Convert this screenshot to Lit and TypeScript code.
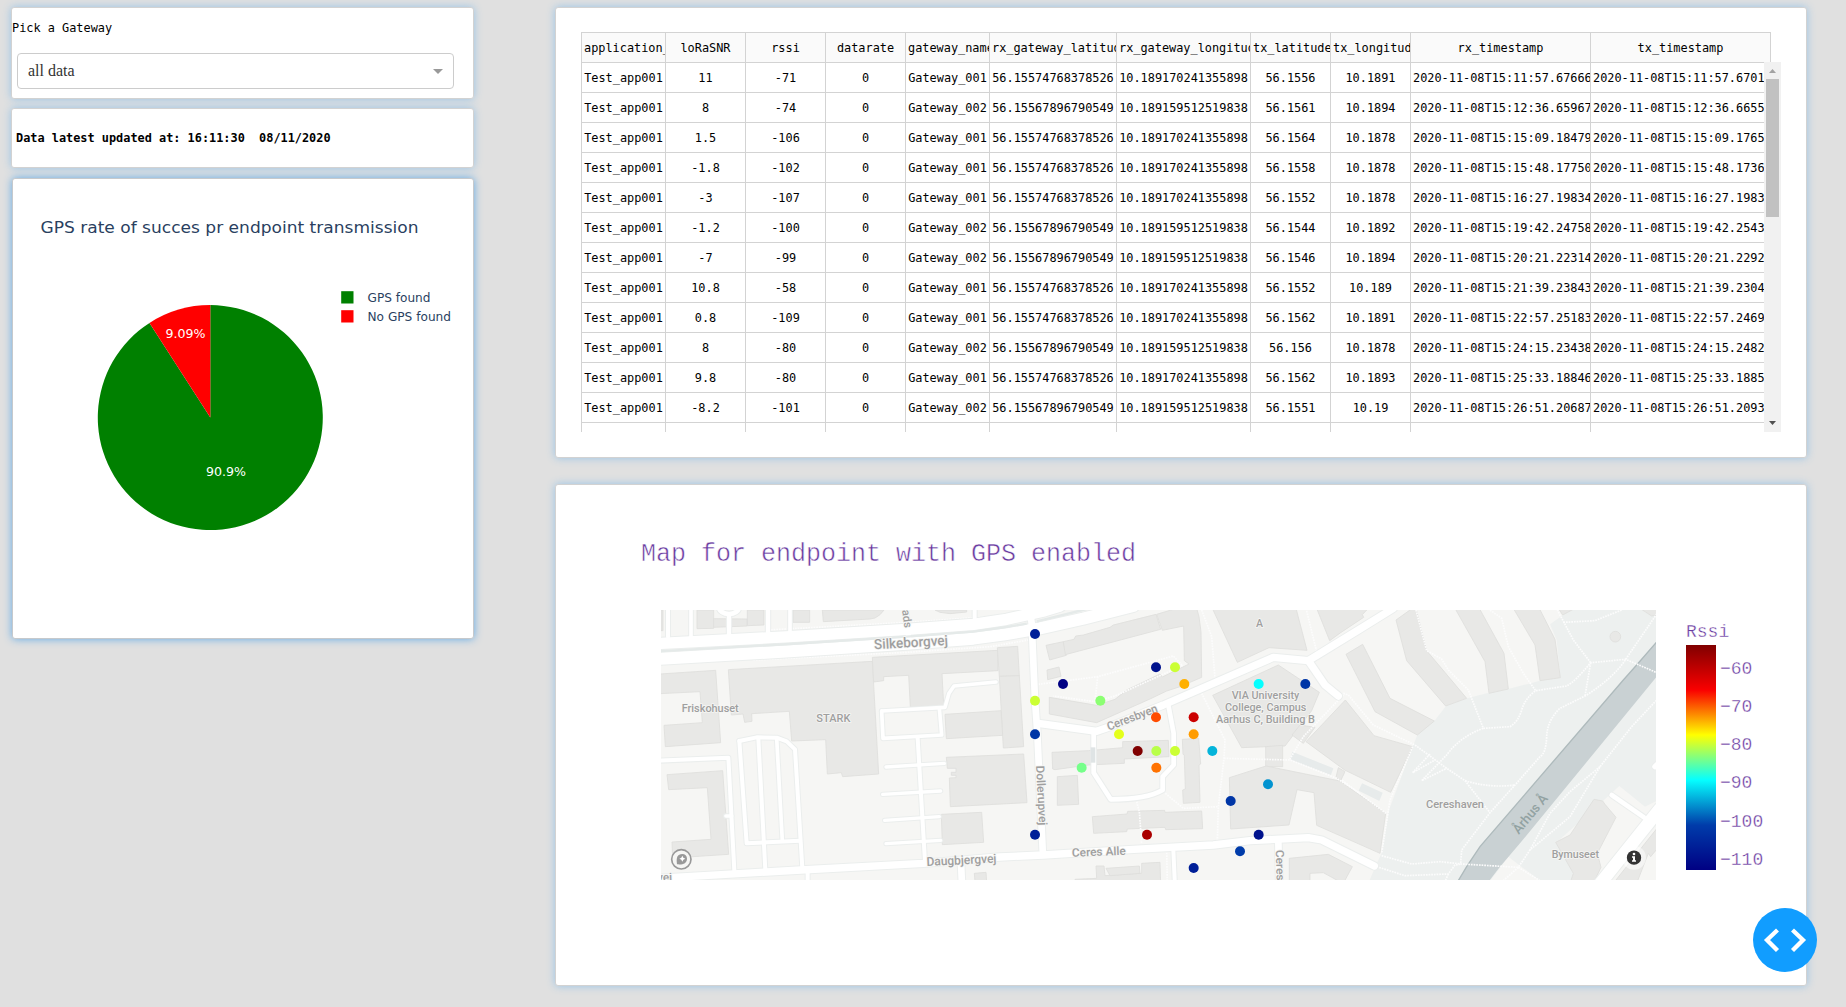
import { LitElement, html, svg, css } from "lit";
import { customElement } from "lit/decorators.js";

const COLUMNS = [
  "application_", "loRaSNR", "rssi", "datarate", "gateway_name", "rx_gateway_latitude",
  "rx_gateway_longitude", "tx_latitude", "tx_longitude", "rx_timestamp", "tx_timestamp",
];

// SNR, RSSI, gateway number, tx latitude, tx longitude, rx time, tx time
const READINGS: [string, string, number, string, string, string, string][] = [
  ["11", "-71", 1, "56.1556", "10.1891", "15:11:57.67666", "15:11:57.6701"],
  ["8", "-74", 2, "56.1561", "10.1894", "15:12:36.65967", "15:12:36.6655"],
  ["1.5", "-106", 1, "56.1564", "10.1878", "15:15:09.18479", "15:15:09.1765"],
  ["-1.8", "-102", 1, "56.1558", "10.1878", "15:15:48.17750", "15:15:48.1736"],
  ["-3", "-107", 1, "56.1552", "10.1878", "15:16:27.19834", "15:16:27.1983"],
  ["-1.2", "-100", 2, "56.1544", "10.1892", "15:19:42.24758", "15:19:42.2543"],
  ["-7", "-99", 2, "56.1546", "10.1894", "15:20:21.22314", "15:20:21.2292"],
  ["10.8", "-58", 1, "56.1552", "10.189", "15:21:39.23843", "15:21:39.2304"],
  ["0.8", "-109", 1, "56.1562", "10.1891", "15:22:57.25183", "15:22:57.2469"],
  ["8", "-80", 2, "56.156", "10.1878", "15:24:15.23438", "15:24:15.2482"],
  ["9.8", "-80", 1, "56.1562", "10.1893", "15:25:33.18846", "15:25:33.1885"],
  ["-8.2", "-101", 2, "56.1551", "10.19", "15:26:51.20687", "15:26:51.2093"],
];

const GATEWAYS: Record<number, [string, string, string]> = {
  1: ["Gateway_001", "56.15574768378526", "10.189170241355898"],
  2: ["Gateway_002", "56.15567896790549", "10.189159512519838"],
};

const ROWS: string[][] = READINGS.map(([snr, rssi, gw, lat, lon, rx, tx]) => [
  "Test_app001", snr, rssi, "0", ...GATEWAYS[gw], lat, lon, "2020-11-08T" + rx, "2020-11-08T" + tx,
]);

@customElement("data-grid")
export class DataGrid extends LitElement {
  static styles = css`
    :host { display: block; font: 11.88px/29px "DejaVu Sans Mono", monospace; color: #000; }
    .row { display: grid; grid-template-columns: 84px 80px 80px 80px 84px 127px 134px 80px 80px 180px 180px; height: 30px; }
    .head { width: 1189px; border-right: 1px solid #d3d3d3; }
    .head .cell { background: #fafafa; }
    .cell { box-sizing: border-box; height: 30px; border-top: 1px solid #d3d3d3; border-left: 1px solid #d3d3d3; padding: 1px 2px 0; overflow: hidden; white-space: nowrap; text-align: center; }
    .row:not(.head) .cell:nth-child(11) { text-align: left; }
    .body { display: flex; height: 370px; }
    .rows { width: 1183px; height: 370px; overflow: hidden; }
    .bar { width: 17px; background: #f1f1f1; display: flex; flex-direction: column; align-items: center; }
    .bar svg { display: block; width: 17px; height: 17px; }
    .thumb { width: 13px; height: 138px; background: #c1c1c1; }
    .space { flex: 1; }
  `;

  render() {
    return html`
      <div class="row head">${COLUMNS.map((c) => html`<div class="cell">${c}</div>`)}</div>
      <div class="body">
        <div class="rows">
          ${ROWS.map((r) => html`<div class="row">${r.map((c) => html`<div class="cell">${c}</div>`)}</div>`)}
          <div class="row">${COLUMNS.map(() => html`<div class="cell"></div>`)}</div>
        </div>
        <div class="bar">
          <svg viewBox="0 0 17 17"><path d="M5 11L8.5 7L12 11Z" fill="#a3a3a3" /></svg>
          <div class="thumb"></div>
          <div class="space"></div>
          <svg viewBox="0 0 17 17"><path d="M5 6L8.5 10L12 6Z" fill="#505050" /></svg>
        </div>
      </div>
    `;
  }
}

@customElement("gps-pie")
export class GpsPie extends LitElement {
  static styles = css`
    :host { display: block; }
    svg { display: block; width: 459px; height: 459px; font-family: Verdana, "DejaVu Sans", sans-serif; }
    .title { font-size: 16.7px; fill: #2a3f5f; }
    .legend { font-size: 12px; fill: #2a3f5f; }
    .value { font-size: 12.4px; fill: #fff; text-anchor: middle; }
  `;

  render() {
    const cx = 210.3, cy = 417.6, r = 112.5;
    const a = (2 * Math.PI) / 11;
    const x = cx - r * Math.sin(a), y = cy - r * Math.cos(a);
    return html`
      <svg viewBox="13 179 459 459">
        <text class="title" x="40.5" y="232.600" textLength="378" lengthAdjust="spacingAndGlyphs">GPS rate of succes pr endpoint transmission</text>
        <path d="M${cx} ${cy}V${cy - r}A${r} ${r} 0 1 1 ${x} ${y}Z" fill="#008000" />
        <path d="M${cx} ${cy}L${x} ${y}A${r} ${r} 0 0 1 ${cx} ${cy - r}Z" fill="#f00" />
        <text class="value" x="185.5" y="338" textLength="40" lengthAdjust="spacingAndGlyphs">9.09%</text>
        <text class="value" x="226" y="476" textLength="40" lengthAdjust="spacingAndGlyphs">90.9%</text>
        <rect x="341.2" y="291.2" width="12.3" height="12.3" fill="#008000" />
        <rect x="341.2" y="310.2" width="12.3" height="12.3" fill="#f00" />
        <text class="legend" x="367.5" y="302" textLength="63" lengthAdjust="spacingAndGlyphs">GPS found</text>
        <text class="legend" x="367.5" y="321" textLength="83.5" lengthAdjust="spacingAndGlyphs">No GPS found</text>
      </svg>
    `;
  }
}

type Shapes = { t: string; parks?: string[]; water?: string[]; buildings: string[]; roads: [number, string][]; paths: string[] };

// The street map is described in three sectors, each with its own origin.
const WEST: Shapes = {
  t: "translate(0 0)",
  buildings: [
    "63,270 69,270 69,332 63,332",
    "171,270 221,270 221,325 171,326",
    "221,296 322,297 322,318 221,322",
    "322,270 372,270 372,315 322,317",
    "459,270 509,270 509,307 459,307",
    "547,270 732,270 720,284 705,294 690,297 550,305",
    "885,270 980,270 980,276 930,281 900,277",
    "60,462 227,451 242,668 76,680 72,616 187,608 180,515 60,521",
    "265,449 697,424 716,762 608,770 604,758 562,762 557,659 455,663 448,574 335,581 336,604 314,607 309,582 274,585",
    "697,412 1074,391 1074,452 906,461 911,556 811,561 806,466 731,470 731,482 701,486",
    "1072,383 1133,379 1138,468 1078,469",
    "1078,469 1138,467 1151,680 1090,684",
    "915,583 1083,572 1088,646 919,656",
    "919,712 1151,702 1161,848 931,860 928,774 948,773 948,766 934,766 934,757 948,757 948,745 922,745",
    "904,883 1025,877 1031,967 907,974",
    "81,764 248,752 266,1003 98,1014 96,966 213,958 202,803 86,809",
    "1003,1060 1038,1057 1040,1085 1005,1085",
  ],
  roads: [
    [12, "M84 265V350"], [11, "M153 265V350"], [13, "M267 285V345"], [14, "M237 262A30 20 0 0 0 297 262"],
    [13, "M384 265V335"], [11, "M450 265V335"], [12, "M1004 265V294"], [16, "M796 265L808 370"],
    [34, "M50 371L450 350L800 328L1000 313L1100 298L1215 272L1260 258"],
    [36, "M50 417L450 394L800 371L1000 356L1090 344L1200 325L1330 296L1480 258"],
    [12, "M60 722L265 713L283 1052"], [11, "M258 888H275"],
    [12, "M298 663L350 652L410 653L440 664L465 688L487 1045"],
    [12, "M298 663L320 970L480 962"], [12, "M355 655L376 1050"], [11, "M410 655L427 962"],
    [11, "M725 573L915 562L927 520L942 498L1068 486"],
    [11, "M725 573L729 655L905 645L898 565"],
    [12, "M833 655L855 1025"],
    [10, "M738 741L913 730"], [10, "M728 823L902 813"], [10, "M734 901L898 890"], [10, "M738 971L902 961"],
    [12, "M503 1050V1090"], [20, "M963 1030L966 1090"],
    [20, "M1168 260L1175 310L1185 540L1192 640L1208 990"],
    [22, "M50 1075L483 1050L850 1030L1080 1011L1210 1005L1480 988L1720 975L1830 962L2005 953L2045 960L2203 1038"],
  ],
  paths: ["M385 330L800 307L1050 290L1165 268", "M340 420L800 397L1050 380L1165 360"],
};

const CENTRE: Shapes = {
  t: "translate(1080 210)",
  water: ["877,485 1000,535 993,555 870,508"],
  buildings: [
    "138,166 190,155 199,196 149,210",
    "190,155 222,148 227,138 250,135 330,112 340,105 468,73 482,118 196,194",
    "470,73 530,55 590,55 597,80 603,125 605,262 540,290 500,303 450,327 290,398 148,372 148,322 290,346 345,328 380,300 480,252 487,261 567,222 553,212 551,108 487,121",
    "141,240 177,231 183,259 143,269",
    "156,487 265,482 368,473 368,455 505,451 507,500 373,507 373,520 265,525 165,539 158,537",
    "172,560 232,556 236,643 172,646",
    "547,448 596,445 602,522 597,525 600,637 550,640 548,600 556,597 553,495 549,493",
    "277,680 381,672 383,664 494,661 495,667 605,663 608,716 497,719 495,712 382,717 380,725 281,730",
    "637,55 888,55 921,181 807,173 712,217",
    "950,55 1105,55 1087,74 1091,82 1022,128 989,152",
    "638,316 835,225 958,307 935,362 855,468 725,473",
    "797,470 848,466 848,530 797,530",
    "688,563 798,528 1020,573 1157,670 1140,790 950,706 942,608 891,599 867,705 692,717",
    "868,805 985,793 1057,830 1030,880 1010,870 970,848 930,850 930,880 868,880",
    "225,868 290,865 288,828 312,828 315,857 425,850 425,820 480,817 482,880 225,880",
    "318,835 418,828 420,850 330,857",
    "1015,533 1035,545 1022,572 1008,562",
    "900,405 945,412 910,460 876,435",
  ],
  roads: [
    [14, "M505 345L521 430V525L488 560V600Q440 628 332 628L281 548V430"],
    [22, "M115 400L290 424L330 410L490 345L820 202L925 212L1075 120L1180 55"],
    [22, "M925 212L975 285L1015 318"],
    [12, "M520 780L525 890"], [20, "M835 755L838 890"],
  ],
  paths: [
    "M605 60L635 140L645 265", "M605 310L675 450L672 505L655 650L652 750",
    "M672 505L870 510L1010 565L1080 610", "M490 605L550 655L655 650", "M410 635L418 665L425 760",
    "M115 283L293 260L520 198L545 225", "M293 260L285 335L160 318", "M285 335L345 318L550 225",
    "M500 780L502 880", "M918 55L950 185", "M1030 315L910 440L868 510",
  ],
};

const EAST: Shapes = {
  t: "translate(2100 210)",
  parks: [
    "630,103 665,78 700,55 955,55 955,630 915,650 838,588 770,650 650,757 700,850 690,880 610,880 505,800 445,880 85,880 108,825 125,790 147,660 218,470 232,435 283,393 318,348 382,325 440,310 505,297 600,272 661,263 650,150",
  ],
  water: ["66,580 128,608 118,633 56,602"],
  buildings: [
    "18,193 68,163 150,325 283,393 232,435 105,365",
    "168,90 217,55 228,55 260,182 380,325 317,348 200,212",
    "345,55 418,55 492,190 505,297 447,310 435,215",
    "520,55 598,55 645,148 661,263 600,272 585,165",
    "668,75 705,55 655,55",
    "900,55 955,55 955,75 935,78",
    "16,330 102,437 218,470 152,607 14,540 -102,455",
    "762,628 788,633 795,643 828,682 772,790 783,832 760,880 690,880 700,850 647,757 690,735 720,690",
    "955,710 955,772 932,800 925,790 890,880 820,880 915,760",
  ],
  roads: [
    [14, "M815 615L912 682"], [16, "M945 530L960 515"],
    [37, "M770 894L960 656"],
  ],
  paths: [
    "M10 310L25 315L100 405L225 465L320 535L375 572L450 668",
    "M228 60L260 182L305 207L325 240L385 300L430 415",
    "M450 60L485 85L505 170L550 250L587 302",
    "M430 415L510 410Q535 395 545 360T587 302L680 288Q705 275 752 218L857 208L955 250",
    "M430 415Q360 440 320 495L245 572L320 535", "M270 492L218 548L285 510",
    "M375 572Q450 595 525 585",
    "M955 65L857 208Q820 265 735 318L660 355Q622 390 620 440T600 500L525 585L450 668L365 780L362 820",
    "M752 218L735 318", "M752 218L700 150L652 60", "M670 97L765 92L845 60",
    "M218 470L150 630L125 790", "M125 797L215 822L300 815L365 822L535 832", "M110 830L195 857L325 852L345 825L365 822", "M325 852L315 875",
    "M955 325L875 410L780 530L690 680L570 780L535 832", "M780 530L690 605L630 670L570 780",
    "M535 832L600 872", "M535 832L490 872", "M138 670L5 570",
  ],
};

const SECTORS = [WEST, CENTRE, EAST];

const POINTS: [number, number, string][] = [
  [105, 132, "#001f98"], [189, 282, "#000083"], [468, 232, "#00128d"], [525, 232, "#cbff34"],
  [553, 282, "#ffb000"], [301, 332, "#8cff73"], [105, 332, "#cbff34"], [468, 382, "#ff4c00"],
  [581, 382, "#cb0000"], [357, 433, "#e4ff1b"], [581, 433, "#ff9c00"], [105, 433, "#0036a6"],
  [413, 483, "#800000"], [469, 483, "#b9ff48"], [525, 483, "#cbff34"], [637, 483, "#04b4da"],
  [245, 533, "#76ff8a"], [469, 533, "#ff7200"], [776, 282, "#05ffff"], [916, 282, "#0036a6"],
  [804, 583, "#0293d0"], [692, 633, "#0036a6"], [105, 734, "#001f98"], [441, 734, "#aa0000"],
  [776, 734, "#00128d"], [720, 784, "#003caa"], [581, 834, "#001f98"],
];

// x, y, rotation, length, font size, text; x and y are relative to the west sector
const LABELS: [number, number, number, number, number, string][] = [
  [703, 388, -3.4, 222, 42, "Silkeborgvej"],
  [125, 576, 0, 171, 33, "Friskohuset"],
  [529, 606, 0, 102, 33, "STARK"],
  [860, 1038, -2.8, 210, 37, "Daugbjergvej"],
  [52, 1084, -2, 45, 34, "vej"],
  [786, 271, 82, 54, 34, "ads"],
  [1406, 632, -21, 160, 35, "Ceresbyen"],
  [1188, 737, 87, 180, 35, "Dollerupvej"],
  [1296, 1010, -2, 162, 35, "Ceres Alle"],
  [1848, 320, 0, 21, 33, "A"],
  [1775, 538, 0, 203, 34, "VIA University"],
  [1755, 574, 0, 244, 34, "College, Campus"],
  [1728, 610, 0, 297, 34, "Aarhus C, Building B"],
  [1907, 990, 88, 92, 34, "Ceres"],
  [2358, 864, 0, 174, 34, "Cereshaven"],
  [2735, 1014, 0, 142, 34, "Bymuseet"],
  [2636, 944, -50, 140, 40, "Århus Å"],
];

@customElement("endpoint-map")
export class EndpointMap extends LitElement {
  static styles = css`
    :host { display: block; width: 995px; height: 270px; }
    svg { display: block; width: 995px; height: 270px; }
    .land { fill: #f6f6f4; }
    .park { fill: #edf0ef; }
    .pond { fill: #e7ebeb; }
    .river { fill: #c9d1d3; }
    .bank { fill: none; stroke: #aebabc; stroke-width: 4; }
    .building { fill: #e8e8e6; stroke: #dededc; stroke-width: 2.5; }
    .casing { fill: none; stroke: #ebeeed; stroke-linecap: round; stroke-linejoin: round; }
    .road { fill: none; stroke: #fff; stroke-linecap: round; stroke-linejoin: round; }
    .path { fill: none; stroke: #fcfcfc; stroke-width: 5; stroke-dasharray: 5 3; }
    .median { fill: none; stroke: #e5eae9; stroke-width: 7; }
    .label { font-family: "Roboto", sans-serif; font-weight: 500; fill: #9f9f9f; stroke: #f6f6f4; stroke-width: 5; stroke-linejoin: round; paint-order: stroke; }
    .label.water { fill: #92a2a2; stroke: #c9d1d3; }
  `;

  render() {
    return html`
      <svg viewBox="63 270 2985 810">
        <rect class="land" x="63" y="270" width="2985" height="810" />
        ${SECTORS.map((s) => svg`<g transform=${s.t}>
          ${(s.parks ?? []).map((p) => svg`<polygon class="park" points=${p} />`)}
          ${(s.water ?? []).map((p) => svg`<polygon class="pond" points=${p} />`)}
        </g>`)}
        <g transform="translate(2100 210)">
          <polygon class="river" points="955,150 890,225 850,270 420,770 380,830 350,880 442,880 480,830 540,760 955,254" />
          <path class="bank" d="M955 150L890 225L850 270L420 770L380 830L350 880" />
        </g>
        ${SECTORS.map((s) => svg`<g transform=${s.t}>
          ${s.buildings.map((p) => svg`<polygon class="building" points=${p} />`)}
        </g>`)}
        <circle class="building" cx="2926" cy="350" r="16" />
        ${SECTORS.map((s) => svg`<g transform=${s.t}>
          ${s.paths.map((d) => svg`<path class="path" d=${d} />`)}
        </g>`)}
        ${SECTORS.map((s) => svg`<g transform=${s.t}>
          ${s.roads.map(([w, d]) => svg`<path class="casing" d=${d} stroke-width=${w + 6} />`)}
        </g>`)}
        ${SECTORS.map((s) => svg`<g transform=${s.t}>
          ${s.roads.map(([w, d]) => svg`<path class="road" d=${d} stroke-width=${w} />`)}
        </g>`)}
        <path class="median" d="M50 394L450 372L800 350L1000 335L1100 321L1160 311M1190 304L1340 267" />
        <polygon points="1352,682 1366,682 1366,728 1352,728" fill="#dfe4e5" />
        ${LABELS.map(([x, y, r, len, size, t]) => svg`<text class=${t === "Århus Å" ? "label water" : "label"}
          transform="translate(${x} ${y}) rotate(${r})" font-size=${size} textLength=${len} lengthAdjust="spacingAndGlyphs">${t}</text>`)}
        <g transform="translate(1080 210)">
          ${POINTS.map(([x, y, c]) => svg`<circle cx=${x} cy=${y} r="15" fill=${c} />`)}
        </g>
        <circle cx="124" cy="1018" r="29" fill="#f6f6f4" stroke="#999" stroke-width="5" />
        <path d="M111 1033C108 1012 112 1002 127 1002A14 14 0 0 1 141 1016C141 1030 128 1035 111 1033Z" fill="#999" />
        <path d="M127 1007L130 1013L136 1016L130 1019L127 1025L124 1019L118 1016L124 1013Z" fill="#fff" />
        <circle cx="2982" cy="1013" r="36" fill="#fff" fill-opacity=".5" />
        <circle cx="2982" cy="1013" r="21.5" fill="#333" />
        <path d="M2976 1009H2985V1021H2988V1025H2976V1021H2979V1013H2976Z" fill="#fff" />
        <circle cx="2982" cy="1002" r="4" fill="#fff" />
      </svg>
    `;
  }
}

const TICKS = ["−60", "−70", "−80", "−90", "−100", "−110"];

@customElement("app-root")
export class AppRoot extends LitElement {
  static styles = css`
    :host { display: block; }
    .page { box-sizing: border-box; width: 1846px; height: 1007px; overflow: hidden; background: #e0e0e0; padding: 7px 0 0 11px; display: grid; grid-template-columns: 463px 1252px; column-gap: 81px; align-items: start; }
    .left, .right { display: flex; flex-direction: column; }
    .card { box-sizing: border-box; background: #fff; border: 1px solid #d2d2d2; border-radius: 3px; box-shadow: 0 0 9px #98c3e6; }
    .pick { height: 92px; margin-bottom: 9px; font: 11.88px/16px "DejaVu Sans Mono", monospace; padding-top: 12px; }
    .select { box-sizing: border-box; width: 437px; height: 36px; margin: 17px 0 0 5px; padding: 0 10px; border: 1px solid #ccc; border-radius: 4px; display: flex; align-items: center; justify-content: space-between; font: 16px/34px "Liberation Serif", serif; color: #333; }
    .arrow { border: 5px solid transparent; border-top-color: #999; border-bottom: 0; }
    .updated { height: 60px; margin-bottom: 10px; padding: 21px 0 0 4px; font: bold 11.88px/16px "DejaVu Sans Mono", monospace; white-space: pre; }
    .pie { height: 461px; margin-left: 1px; box-shadow: 0 0 9px #62aae6; border-color: #c6c9cc; }
    .table { height: 451px; margin-bottom: 26px; padding: 24px 0 0 25px; }
    .map { height: 502px; padding-top: 55px; }
    .title { margin-left: 85px; font: 25px/30px "Liberation Mono", monospace; color: #693aa0; -webkit-text-stroke: 0.5px #fff; }
    .plot { display: flex; margin: 40px 0 0 105px; }
    .scale { margin-left: 30px; padding-top: 12px; font: 18px/20px "Liberation Mono", monospace; color: #693aa0; -webkit-text-stroke: 0.35px #fff; }
    .meter { display: flex; margin-top: 3px; }
    .ramp { width: 30px; height: 225px; background: linear-gradient(to top, rgb(0,0,131), rgb(0,60,170) 20%, rgb(5,255,255) 40%, rgb(255,255,0) 60%, rgb(250,0,0) 80%, rgb(128,0,0)); }
    .ticks { display: flex; flex-direction: column; gap: 18.25px; margin: 13.5px 0 0 4px; }
    .debug { position: absolute; left: 1753px; top: 908px; width: 64px; height: 64px; border-radius: 50%; background: #119dff; }
    .debug svg { display: block; width: 64px; height: 64px; fill: none; stroke: #fff; stroke-width: 4.3; }
  `;

  render() {
    return html`
      <div class="page">
        <div class="left">
          <div class="card pick">
            <div>Pick a Gateway</div>
            <div class="select"><span>all data</span><span class="arrow"></span></div>
          </div>
          <div class="card updated">Data latest updated at: 16:11:30  08/11/2020</div>
          <div class="card pie"><gps-pie></gps-pie></div>
        </div>
        <div class="right">
          <div class="card table"><data-grid></data-grid></div>
          <div class="card map">
            <div class="title">Map for endpoint with GPS enabled</div>
            <div class="plot">
              <endpoint-map></endpoint-map>
              <div class="scale">
                <div>Rssi</div>
                <div class="meter">
                  <div class="ramp"></div>
                  <div class="ticks">${TICKS.map((t) => html`<div>${t}</div>`)}</div>
                </div>
              </div>
            </div>
          </div>
        </div>
        <div class="debug">
          <svg viewBox="0 0 64 64"><path d="M24.5 22L14 32L24.5 42.5M39.500 22L50 32L39.500 42.5" /></svg>
        </div>
      </div>
    `;
  }
}
